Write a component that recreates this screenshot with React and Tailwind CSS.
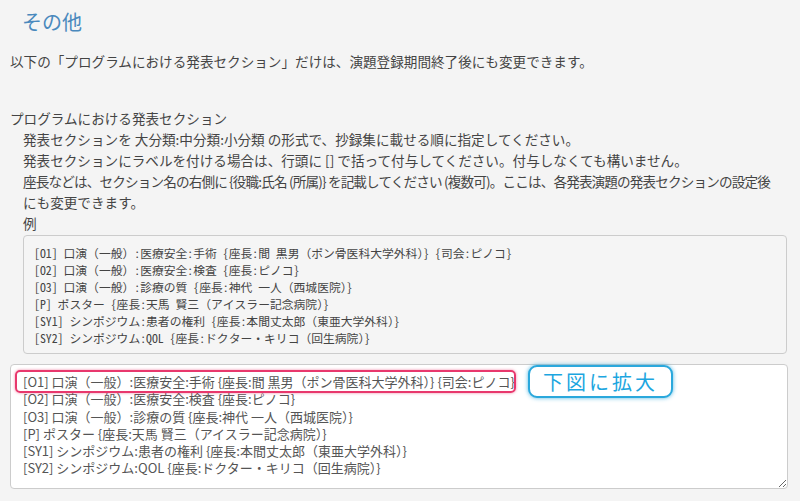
import React from "react";

const sample = [
  "[O1] 口演（一般）:医療安全:手術 {座長:間 黒男（ポン骨医科大学外科）} {司会:ピノコ}",
  "[O2] 口演（一般）:医療安全:検査 {座長:ピノコ}",
  "[O3] 口演（一般）:診療の質 {座長:神代 一人（西城医院）}",
  "[P] ポスター {座長:天馬 賢三（アイスラー記念病院）}",
  "[SY1] シンポジウム:患者の権利 {座長:本間丈太郎（東亜大学外科）}",
  "[SY2] シンポジウム:QOL {座長:ドクター・キリコ（回生病院）}",
];

export default function App() {
  return (
    <div className="min-h-screen w-full bg-[#f4f4f4] text-[#444] font-['Noto_Sans_CJK_JP','Noto_Sans',sans-serif] text-[13.6px] leading-[21px]">
      <div className="pl-[10px] pr-[12px] pt-[8px]">
        <h2 className="pl-[12px] text-[20px] leading-[28px] font-normal text-[#4a89bd]">その他</h2>
        <p className="mt-[15px] whitespace-nowrap">以下の「プログラムにおける発表セクション」だけは、演題登録期間終了後にも変更できます。</p>
        <div className="mt-[36px] whitespace-nowrap">プログラムにおける発表セクション</div>
        <div className="pl-[13px]">
          <div className="whitespace-nowrap">発表セクションを 大分類:中分類:小分類 の形式で、抄録集に載せる順に指定してください。</div>
          <div className="whitespace-nowrap">発表セクションにラベルを付ける場合は、行頭に [] で括って付与してください。付与しなくても構いません。</div>
          <div className="whitespace-nowrap">
            <span className="tracking-[-0.85px]">
              座長などは、セクション名の右側に {"{役職:氏名 (所属)}"} を記載してください (複数可)。ここは、各発表演題の発表セクションの設定後
            </span>
            <br />
            にも変更できます。
          </div>
          <div>例</div>
          <pre className="mt-[1px] mr-[1px] rounded-[4px] border border-[#ccc] bg-[#f5f5f5] pl-[10px] pt-[8px] pb-[7px] text-[11.8px] leading-[17px] text-[#444] font-['Noto_Sans_Mono_CJK_JP','Liberation_Mono','Noto_Sans_CJK_JP',monospace] whitespace-pre">
            {sample.join("\n")}
          </pre>
        </div>
        <div className="relative mt-[10px]">
          <textarea
            readOnly
            defaultValue={sample.join("\n")}
            className="block h-[125px] w-full resize-y rounded-[4px] border border-[#ccc] bg-white pl-[12px] pt-[8px] text-[13px] leading-[17.3px] text-[#555] font-['Noto_Sans_CJK_JP','Noto_Sans',sans-serif] outline-none"
          />
          <div className="pointer-events-none absolute left-[5px] top-[6px] h-[23px] w-[501px] rounded-[5px] border-2 border-[#e8386d] shadow-[0_0_3px_rgba(232,56,109,0.6)]" />
          <div className="pointer-events-none absolute left-[518px] top-[1px] flex h-[33px] w-[145px] items-center justify-center rounded-[9px] border-2 border-[#2aa8dc] bg-white shadow-[0_0_4px_rgba(42,168,220,0.8)] text-[20px] leading-none tracking-[3px] text-[#1ca6e0]">
            下図に拡大
          </div>
        </div>
      </div>
    </div>
  );
}
